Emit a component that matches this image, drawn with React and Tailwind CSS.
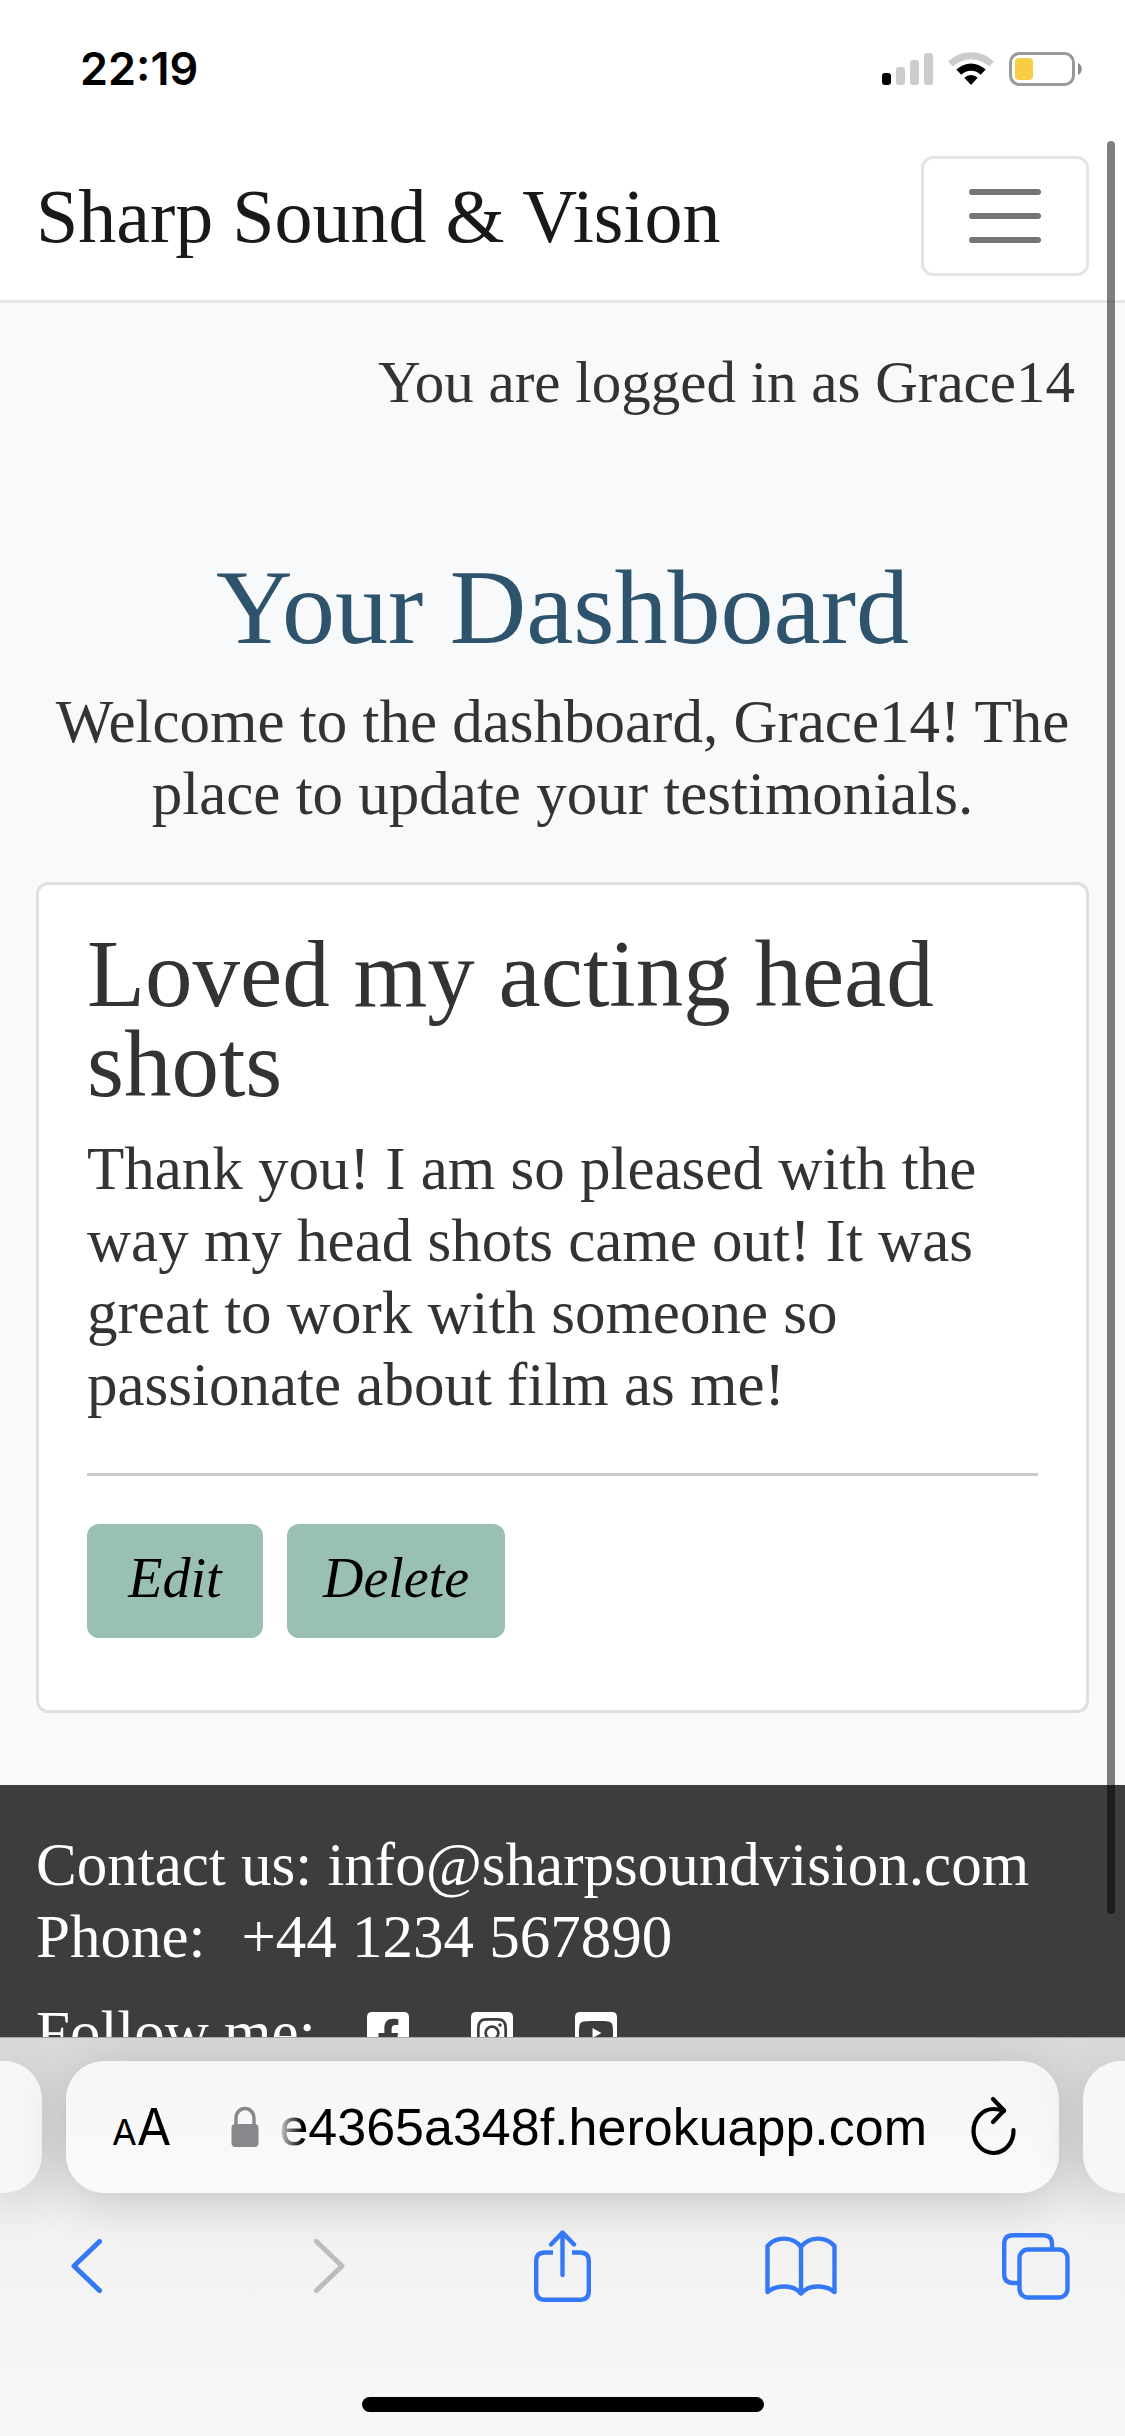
import React from "react";
import { FaFacebookSquare, FaInstagramSquare, FaYoutubeSquare } from "react-icons/fa";

function StatusBar() {
  return (
    <div className="flex h-[132px] shrink-0 items-start justify-between bg-white pt-[42px] pr-[43px] pl-20">
      <span className="font-['Inter',sans-serif] text-[45px] leading-[54px] font-semibold text-black">22:19</span>
      <div className="flex items-start gap-[15px] pt-[10px]">
        <svg width="51" height="34" viewBox="0 0 51 34" aria-label="Signal" role="img">
          <rect x="0" y="21" width="9" height="12" rx="3" fill="#000" />
          <rect x="14" y="15" width="9" height="18" rx="3" fill="#ccc" />
          <rect x="28" y="8" width="9" height="25" rx="3" fill="#ccc" />
          <rect x="42" y="1" width="9" height="32" rx="3" fill="#ccc" />
        </svg>
        <svg width="46" height="34" viewBox="0 0 46 34" aria-label="Wi-Fi" role="img">
          <path d="M0 9.5 A33 33 0 0 1 46 9.5 L41 14.5 A26 26 0 0 0 5 14.5 Z" fill="#ccc" />
          <path d="M8.3 17.6 A21 21 0 0 1 37.7 17.6 L32.7 22.7 A14 14 0 0 0 13.3 22.7 Z" fill="#000" />
          <path d="M16.3 25.8 A9.6 9.6 0 0 1 29.7 25.8 L23 33 Z" fill="#000" />
        </svg>
        <svg width="73" height="34" viewBox="0 0 73 34" aria-label="Battery" role="img">
          <rect x="1.5" y="1.5" width="63" height="31" rx="9" fill="none" stroke="#999" strokeWidth="3" />
          <rect x="6" y="6" width="18" height="22" rx="4" fill="#f8ce46" />
          <path d="M69 11 C74 13 74 21 69 23 Z" fill="#8a8a8a" />
        </svg>
      </div>
    </div>
  );
}

function Navbar() {
  return (
    <nav className="flex items-center justify-between border-b-[3px] border-[#e6e6e6] bg-white px-9 pb-6">
      <a href="#home" className="text-[76px] leading-[90px] text-[#191919]">Sharp Sound &amp; Vision</a>
      <button
        type="button"
        aria-label="Toggle navigation"
        className="flex h-[120px] w-[168px] flex-col items-center justify-center gap-[18px] rounded-xl border-[3px] border-[#e5e5e5]"
      >
        <span className="h-[6px] w-[72px] rounded-full bg-[#757575]" />
        <span className="h-[6px] w-[72px] rounded-full bg-[#757575]" />
        <span className="h-[6px] w-[72px] rounded-full bg-[#757575]" />
      </button>
    </nav>
  );
}

const cardButton =
  "min-w-[176px] rounded-xl bg-[#9abfb4] px-9 pt-[18px] pb-6 text-[56px] leading-[72px] text-black italic";

function Testimonial() {
  return (
    <article className="mx-9 mt-[52px] rounded-xl border-[3px] border-[#dfdfdf] bg-white px-12 pt-11 pb-[72px]">
      <h2 className="text-[95px] leading-[90px]">Loved my acting head shots</h2>
      <p className="mt-6">
        Thank you! I am so pleased with the way my head shots came out! It was great to work with someone so passionate
        about film as me!
      </p>
      <hr className="mt-[52px] mb-12 border-t-[3px] border-[#ccc]" />
      <div className="flex gap-6">
        <button type="button" className={cardButton}>Edit</button>
        <button type="button" className={cardButton}>Delete</button>
      </div>
    </article>
  );
}

function Footer() {
  return (
    <footer className="mt-[72px] bg-[#3c3d3f] px-9 pt-11 pb-12 text-white">
      <p>
        Contact us: <a href="mailto:info@sharpsoundvision.com">info@sharpsoundvision.com</a>
      </p>
      <p className="flex gap-9">
        <span>Phone:</span>
        <a href="tel:+441234567890">+44 1234 567890</a>
      </p>
      <div className="mt-6 flex items-start">
        <span className="mr-12">Follow me:</span>
        <div className="flex gap-[56px] pt-3">
          <a href="#facebook" aria-label="Facebook"><FaFacebookSquare size={48} /></a>
          <a href="#instagram" aria-label="Instagram"><FaInstagramSquare size={48} /></a>
          <a href="#youtube" aria-label="YouTube"><FaYoutubeSquare size={48} /></a>
        </div>
      </div>
    </footer>
  );
}

function AddressBar() {
  return (
    <div className="flex h-[132px] gap-6">
      <div className="w-[42px] shrink-0 rounded-r-[38px] bg-[#f7f7f7] shadow-[0_6px_50px_rgba(0,0,0,0.18)]" />
      <div className="flex min-w-0 flex-1 items-center rounded-[38px] bg-linear-to-b from-[#f6f6f6] to-[#fafafa] pr-9 pl-[46px] shadow-[0_6px_50px_rgba(0,0,0,0.18)]">
        <button type="button" aria-label="Page settings" className="flex items-baseline pt-1 text-black">
          <span className="text-[36px] leading-[60px]">A</span>
          <span className="text-[50px] leading-[60px]">A</span>
        </button>
        <svg className="mr-4 ml-[60px] shrink-0" width="28" height="42" viewBox="0 0 28 42" aria-label="Secure" role="img">
          <path d="M5 20 V12 A9 9.5 0 0 1 23 12 V20" fill="none" stroke="#88878c" strokeWidth="3.4" />
          <rect x="0.5" y="18" width="27" height="23" rx="4" fill="#88878c" />
        </svg>
        <input
          type="text"
          aria-label="Address"
          defaultValue="e4365a348f.herokuapp.com"
          className="w-full min-w-0 flex-1 bg-transparent text-right font-['Liberation_Sans',sans-serif] text-[52px] leading-[60px] text-black outline-none [mask-image:linear-gradient(to_right,transparent,black_28px)]"
        />
        <button type="button" aria-label="Reload" className="ml-10 shrink-0">
          <svg width="56" height="64" viewBox="0 0 56 64" fill="none" stroke="#000" strokeWidth="4.2" strokeLinecap="round" strokeLinejoin="round">
            <path d="M46.5 35 A20 22 0 1 1 26.5 14 Q32 14 37 16" />
            <path d="M26 4 L37 15.5 L26 27" />
          </svg>
        </button>
      </div>
      <div className="w-[42px] shrink-0 rounded-l-[38px] bg-[#f7f7f7] shadow-[0_6px_50px_rgba(0,0,0,0.18)]" />
    </div>
  );
}

const toolClass = "flex h-[72px] w-[72px] items-center justify-center";
const stroke = { fill: "none", strokeWidth: 5, strokeLinecap: "round", strokeLinejoin: "round" };

function Toolbar() {
  return (
    <div className="mt-[37px] flex justify-between px-[50px] text-[#3478f6]">
      <button type="button" aria-label="Back" className={toolClass}>
        <svg width="31" height="54" viewBox="0 0 31 54" stroke="currentColor" {...stroke}>
          <path d="M28.5 2.5 L3 27 L28.5 51.5" />
        </svg>
      </button>
      <button type="button" aria-label="Forward" className={toolClass + " pl-2.5 text-[#bcbcbc]"}>
        <svg width="31" height="54" viewBox="0 0 31 54" stroke="currentColor" {...stroke}>
          <path d="M2.5 2.5 L28 27 L2.5 51.5" />
        </svg>
      </button>
      <button type="button" aria-label="Share" className={toolClass}>
        <svg width="57" height="72" viewBox="0 0 57 72" stroke="currentColor" {...stroke} strokeWidth="4.4">
          <path strokeLinecap="butt" d="M19 22.5 H11 Q2.2 22.5 2.2 31 V61 Q2.2 69.8 11 69.8 H46 Q54.8 69.8 54.8 61 V31 Q54.8 22.5 46 22.5 H38" />
          <path d="M28.5 45 V3 M17 14.5 L28.5 2.5 L40 14.5" />
        </svg>
      </button>
      <button type="button" aria-label="Bookmarks" className={toolClass}>
        <svg width="72" height="60" viewBox="0 0 72 60" stroke="currentColor" {...stroke} strokeWidth="4.4">
          <path d="M36 11 C28 0 11 0 2.5 10 V56 C11 49 28 48 36 57.5 C44 48 61 49 69.5 56 V10 C61 0 44 0 36 11 V57" />
        </svg>
      </button>
      <button type="button" aria-label="Tabs" className={toolClass + " pr-1.5"}>
        <svg className="shrink-0" width="68" height="67" viewBox="0 0 68 67" stroke="currentColor" {...stroke} strokeWidth="4.4">
          <path strokeLinecap="butt" d="M50 16 V11 Q50 2.2 41 2.2 H11 Q2.2 2.2 2.2 11 V41 Q2.2 50 11 50 H17" />
          <rect x="17.5" y="16.5" width="48" height="48" rx="8.5" />
        </svg>
      </button>
    </div>
  );
}

function BrowserChrome() {
  return (
    <div className="shrink-0 overflow-hidden border-t border-[#a5a5a7] bg-linear-to-b from-[#dadada] via-[#f2f2f2] via-50% to-[#f8f8f8] pt-[23px] pb-6 font-['Inter',sans-serif]">
      <AddressBar />
      <Toolbar />
      <div className="mx-auto mt-[95px] h-[15px] w-[402px] rounded-full bg-black" />
    </div>
  );
}

export default function App() {
  return (
    <div className="relative flex h-screen flex-col overflow-hidden bg-[#f8f9fb] font-['Liberation_Serif',serif]">
      <StatusBar />
      <div className="min-h-0 flex-1 overflow-hidden text-[61px] leading-[72px] text-[#333]">
        <div className="bg-white pt-6">
          <Navbar />
        </div>
        <main>
          <p className="pt-[43px] pr-[50px] text-right text-[59px]">You are logged in as Grace14</p>
          <h1 className="mt-[136px] text-center text-[106px] leading-[108px] text-[#2e546d]">Your Dashboard</h1>
          <p className="mt-6 px-9 text-center">
            Welcome to the dashboard, Grace14! The place to update your testimonials.
          </p>
          <Testimonial />
        </main>
        <Footer />
      </div>
      <BrowserChrome />
      <div className="absolute top-[141px] right-[10px] h-[1773px] w-[8px] rounded-full bg-black/50" />
    </div>
  );
}
